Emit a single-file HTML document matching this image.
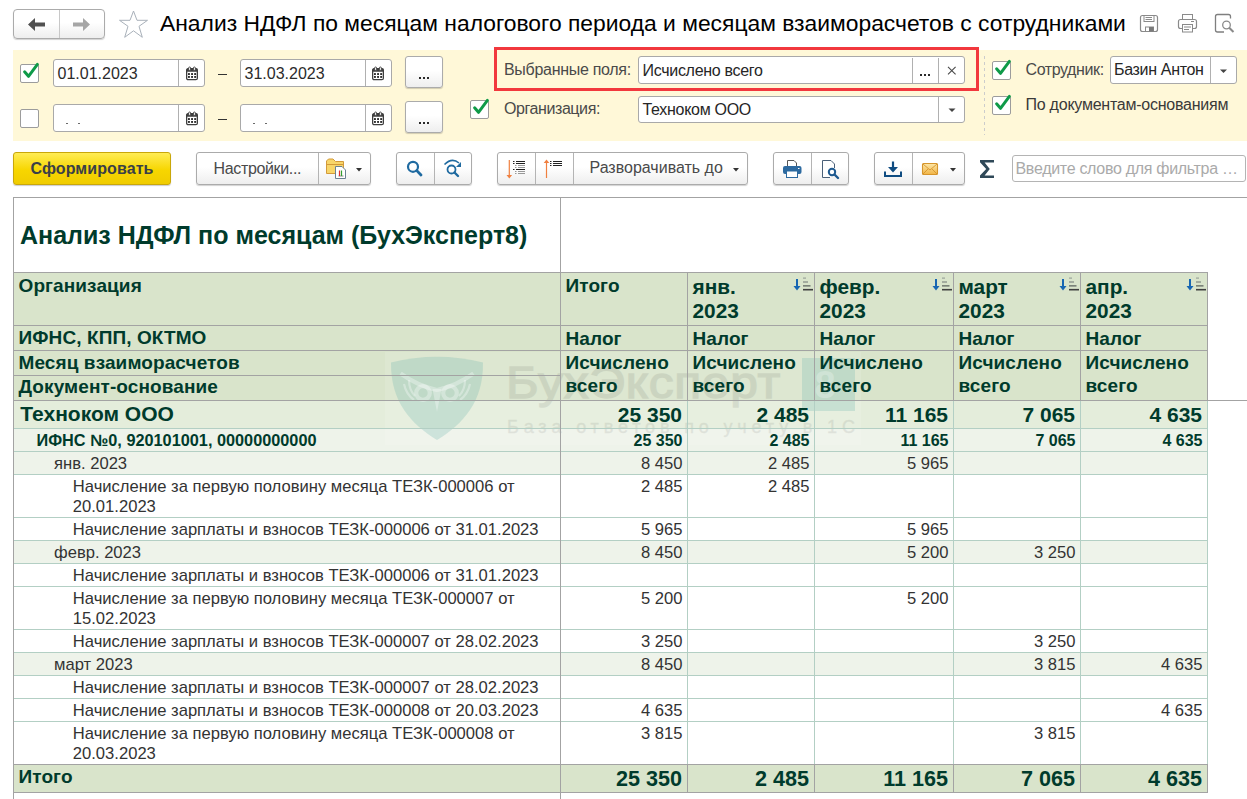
<!DOCTYPE html><html><head><meta charset="utf-8"><style>
*{margin:0;padding:0;box-sizing:border-box}
html,body{width:1247px;height:799px;overflow:hidden;background:#fff}
body{position:relative;font-family:"Liberation Sans",sans-serif}
.a{position:absolute}
.t{position:absolute;white-space:pre;z-index:3}
.btn{position:absolute;border:1px solid #ababab;border-radius:3px;background:linear-gradient(#fff 0%,#fff 45%,#eee 100%);box-shadow:0 1px 1px rgba(0,0,0,.18)}
.dv{position:absolute;width:1px;background:#b4b4b4}
.inp{position:absolute;border:1px solid #a9a9a9;border-radius:3px;background:#fff}
.cb{position:absolute;width:19px;height:19px;border:1px solid #9c9c9c;border-radius:2px;background:#fff}
svg{position:absolute;overflow:visible}
</style></head><body>
<div class="btn" style="left:13px;top:9px;width:92px;height:30px;border-radius:4px"></div>
<div class="a" style="left:59px;top:10px;width:1px;height:28px;background:#c8c8c8"></div>
<svg style="left:0;top:0" width="1" height="1"><path d="M28 24.5 L35 18 L35 22.5 L45 22.5 L45 26.5 L35 26.5 L35 31 Z" fill="#505050"/><path d="M90 24.5 L83 18 L83 22.5 L73 22.5 L73 26.5 L83 26.5 L83 31 Z" fill="#a6a6a6"/><path d="M133.5 11 L137 20.3 L147.5 20.3 L139 26.3 L142.3 37.3 L133.5 30.8 L124.7 37.3 L128 26.3 L119.5 20.3 L130 20.3 Z" fill="none" stroke="#a9b1ba" stroke-width="1"/></svg>
<div class="t" style="top:9.38px;font-size:22.85px;line-height:29px;font-weight:normal;color:#000;left:160px;">Анализ НДФЛ по месяцам налогового периода и месяцам взаиморасчетов с сотрудниками</div>
<svg style="left:0;top:0" width="1" height="1"><rect x="1140.5" y="15.5" width="17" height="16" rx="2" fill="none" stroke="#8a8a8a" stroke-width="1.2"/><rect x="1144" y="15.5" width="10" height="6" fill="none" stroke="#8a8a8a" stroke-width="1"/><line x1="1145.5" y1="17.5" x2="1152" y2="17.5" stroke="#8a8a8a"/><line x1="1145.5" y1="19.5" x2="1152" y2="19.5" stroke="#8a8a8a"/><rect x="1145.5" y="27" width="8" height="4.5" fill="#fff" stroke="#8a8a8a" stroke-width="1"/><rect x="1149" y="27" width="4.5" height="4.5" fill="#7a7a7a"/><rect x="1178.5" y="19.5" width="18" height="9" rx="2" fill="none" stroke="#8a8a8a" stroke-width="1.2"/><rect x="1182.5" y="14.5" width="10" height="5" fill="none" stroke="#8a8a8a" stroke-width="1"/><rect x="1182.5" y="24.5" width="10" height="7.5" fill="#fff" stroke="#8a8a8a" stroke-width="1"/><line x1="1184" y1="27" x2="1191" y2="27" stroke="#8a8a8a"/><line x1="1184" y1="29.5" x2="1189" y2="29.5" stroke="#8a8a8a"/><line x1="1191" y1="21.5" x2="1194" y2="21.5" stroke="#8a8a8a"/><path d="M1224 32 L1217.5 32 Q1215.5 32 1215.5 30 L1215.5 16.5 Q1215.5 14.5 1217.5 14.5 L1228.5 14.5 Q1230.5 14.5 1230.5 16.5 L1230.5 18.5" fill="none" stroke="#7f7f7f" stroke-width="1.3"/><circle cx="1226.5" cy="25" r="3.8" fill="none" stroke="#8a8a8a" stroke-width="1.3"/><line x1="1229.2" y1="27.8" x2="1233.5" y2="32" stroke="#8a8a8a" stroke-width="2"/></svg>
<div class="a" style="left:13px;top:50px;width:1234px;height:91px;background:#fff8d8"></div>
<div class="cb" style="left:20px;top:64px"></div>
<svg style="left:20px;top:64px" width="1" height="1"><path d="M4.6 7.8 L8.5 12.3 L17.4 0.4" fill="none" stroke="#0f9a48" stroke-width="3" stroke-linecap="round" stroke-linejoin="round"/></svg>
<div class="inp" style="left:53px;top:59px;width:152px;height:28px"></div>
<div class="a" style="left:178px;top:60px;width:1px;height:26px;background:#b0b0b0"></div>
<svg style="left:185.5px;top:66.5px" width="1" height="1"><rect x="0.65" y="1.65" width="10.7" height="11" rx="1.5" fill="#fff" stroke="#3e3e3e" stroke-width="1.3"/><rect x="0.5" y="1.5" width="11" height="3.3" rx="1" fill="#3e3e3e"/><rect x="2.6" y="0" width="2" height="3.4" rx="1" fill="#fff" stroke="#3e3e3e" stroke-width="0.9"/><rect x="7.4" y="0" width="2" height="3.4" rx="1" fill="#fff" stroke="#3e3e3e" stroke-width="0.9"/><rect x="2.0" y="6.1" width="1.9" height="1.9" fill="#2e2e2e"/><rect x="5.1" y="6.1" width="1.9" height="1.9" fill="#2e2e2e"/><rect x="8.2" y="6.1" width="1.9" height="1.9" fill="#2e2e2e"/><rect x="2.0" y="9.0" width="1.9" height="1.9" fill="#2e2e2e"/><rect x="5.1" y="9.0" width="1.9" height="1.9" fill="#2e2e2e"/><rect x="8.2" y="9.0" width="1.9" height="1.9" fill="#2e2e2e"/></svg>
<div class="t" style="top:64.06px;font-size:16px;line-height:20px;font-weight:normal;color:#2b2b2b;left:57.5px;">01.01.2023</div>
<div class="a" style="left:218px;top:74px;width:9px;height:1px;background:#333"></div>
<div class="inp" style="left:240px;top:59px;width:151.5px;height:28px"></div>
<div class="a" style="left:365px;top:60px;width:1px;height:26px;background:#b0b0b0"></div>
<svg style="left:372.25px;top:66.5px" width="1" height="1"><rect x="0.65" y="1.65" width="10.7" height="11" rx="1.5" fill="#fff" stroke="#3e3e3e" stroke-width="1.3"/><rect x="0.5" y="1.5" width="11" height="3.3" rx="1" fill="#3e3e3e"/><rect x="2.6" y="0" width="2" height="3.4" rx="1" fill="#fff" stroke="#3e3e3e" stroke-width="0.9"/><rect x="7.4" y="0" width="2" height="3.4" rx="1" fill="#fff" stroke="#3e3e3e" stroke-width="0.9"/><rect x="2.0" y="6.1" width="1.9" height="1.9" fill="#2e2e2e"/><rect x="5.1" y="6.1" width="1.9" height="1.9" fill="#2e2e2e"/><rect x="8.2" y="6.1" width="1.9" height="1.9" fill="#2e2e2e"/><rect x="2.0" y="9.0" width="1.9" height="1.9" fill="#2e2e2e"/><rect x="5.1" y="9.0" width="1.9" height="1.9" fill="#2e2e2e"/><rect x="8.2" y="9.0" width="1.9" height="1.9" fill="#2e2e2e"/></svg>
<div class="t" style="top:64.06px;font-size:16px;line-height:20px;font-weight:normal;color:#2b2b2b;left:244.5px;">31.03.2023</div>
<div class="btn" style="left:405px;top:56px;width:38px;height:32px"></div>
<div class="a" style="left:419px;top:76.5px;width:2px;height:2.0px;background:#2a2a2a"></div>
<div class="a" style="left:423px;top:76.5px;width:2px;height:2.0px;background:#2a2a2a"></div>
<div class="a" style="left:427px;top:76.5px;width:2px;height:2.0px;background:#2a2a2a"></div>
<div class="cb" style="left:20px;top:109px"></div>
<div class="inp" style="left:53px;top:104px;width:152px;height:28px"></div>
<div class="a" style="left:178px;top:105px;width:1px;height:26px;background:#b0b0b0"></div>
<svg style="left:185.5px;top:111.5px" width="1" height="1"><rect x="0.65" y="1.65" width="10.7" height="11" rx="1.5" fill="#fff" stroke="#3e3e3e" stroke-width="1.3"/><rect x="0.5" y="1.5" width="11" height="3.3" rx="1" fill="#3e3e3e"/><rect x="2.6" y="0" width="2" height="3.4" rx="1" fill="#fff" stroke="#3e3e3e" stroke-width="0.9"/><rect x="7.4" y="0" width="2" height="3.4" rx="1" fill="#fff" stroke="#3e3e3e" stroke-width="0.9"/><rect x="2.0" y="6.1" width="1.9" height="1.9" fill="#2e2e2e"/><rect x="5.1" y="6.1" width="1.9" height="1.9" fill="#2e2e2e"/><rect x="8.2" y="6.1" width="1.9" height="1.9" fill="#2e2e2e"/><rect x="2.0" y="9.0" width="1.9" height="1.9" fill="#2e2e2e"/><rect x="5.1" y="9.0" width="1.9" height="1.9" fill="#2e2e2e"/><rect x="8.2" y="9.0" width="1.9" height="1.9" fill="#2e2e2e"/></svg>
<div class="a" style="left:66px;top:122.8px;width:2.2px;height:1.5px;background:#6a6a6a"></div>
<div class="a" style="left:78px;top:122.8px;width:2.2px;height:1.5px;background:#6a6a6a"></div>
<div class="a" style="left:218px;top:118.5px;width:9px;height:1.0px;background:#333"></div>
<div class="inp" style="left:240px;top:104px;width:151.5px;height:28px"></div>
<div class="a" style="left:365px;top:105px;width:1px;height:26px;background:#b0b0b0"></div>
<svg style="left:372.25px;top:111.5px" width="1" height="1"><rect x="0.65" y="1.65" width="10.7" height="11" rx="1.5" fill="#fff" stroke="#3e3e3e" stroke-width="1.3"/><rect x="0.5" y="1.5" width="11" height="3.3" rx="1" fill="#3e3e3e"/><rect x="2.6" y="0" width="2" height="3.4" rx="1" fill="#fff" stroke="#3e3e3e" stroke-width="0.9"/><rect x="7.4" y="0" width="2" height="3.4" rx="1" fill="#fff" stroke="#3e3e3e" stroke-width="0.9"/><rect x="2.0" y="6.1" width="1.9" height="1.9" fill="#2e2e2e"/><rect x="5.1" y="6.1" width="1.9" height="1.9" fill="#2e2e2e"/><rect x="8.2" y="6.1" width="1.9" height="1.9" fill="#2e2e2e"/><rect x="2.0" y="9.0" width="1.9" height="1.9" fill="#2e2e2e"/><rect x="5.1" y="9.0" width="1.9" height="1.9" fill="#2e2e2e"/><rect x="8.2" y="9.0" width="1.9" height="1.9" fill="#2e2e2e"/></svg>
<div class="a" style="left:253px;top:122.8px;width:2.2px;height:1.5px;background:#6a6a6a"></div>
<div class="a" style="left:265px;top:122.8px;width:2.2px;height:1.5px;background:#6a6a6a"></div>
<div class="btn" style="left:405px;top:101px;width:38px;height:32px"></div>
<div class="a" style="left:419px;top:121.5px;width:2px;height:2.0px;background:#2a2a2a"></div>
<div class="a" style="left:423px;top:121.5px;width:2px;height:2.0px;background:#2a2a2a"></div>
<div class="a" style="left:427px;top:121.5px;width:2px;height:2.0px;background:#2a2a2a"></div>
<div class="a" style="left:494px;top:47px;width:485px;height:44px;border:3px solid #f2383d"></div>
<div class="t" style="top:60.36px;font-size:16px;line-height:20px;font-weight:normal;color:#4a4a4a;letter-spacing:-0.3px;left:504px;">Выбранные поля:</div>
<div class="inp" style="left:638px;top:56px;width:327px;height:28px"></div>
<div class="a" style="left:912px;top:57.5px;width:1px;height:25.5px;background:#b0b0b0"></div>
<div class="a" style="left:938px;top:57.5px;width:1px;height:25.5px;background:#b0b0b0"></div>
<div class="t" style="top:60.66px;font-size:16px;line-height:20px;font-weight:normal;color:#262626;letter-spacing:-0.3px;left:642.5px;">Исчислено всего</div>
<div class="a" style="left:920px;top:74px;width:2px;height:2px;background:#2a2a2a"></div>
<div class="a" style="left:924px;top:74px;width:2px;height:2px;background:#2a2a2a"></div>
<div class="a" style="left:928px;top:74px;width:2px;height:2px;background:#2a2a2a"></div>
<svg style="left:0;top:0" width="1" height="1"><path d="M948 66.8 L955.6 74.4 M955.6 66.8 L948 74.4" stroke="#4a4a4a" stroke-width="1.1"/></svg>
<div class="cb" style="left:470px;top:99.5px"></div>
<svg style="left:470px;top:99.5px" width="1" height="1"><path d="M4.6 7.8 L8.5 12.3 L17.4 0.4" fill="none" stroke="#0f9a48" stroke-width="3" stroke-linecap="round" stroke-linejoin="round"/></svg>
<div class="t" style="top:99.46px;font-size:16px;line-height:20px;font-weight:normal;color:#4a4a4a;letter-spacing:-0.42px;left:504px;">Организация:</div>
<div class="inp" style="left:638px;top:96px;width:327px;height:27px"></div>
<div class="a" style="left:938px;top:97px;width:1px;height:25px;background:#b0b0b0"></div>
<div class="t" style="top:99.66px;font-size:16px;line-height:20px;font-weight:normal;color:#262626;letter-spacing:-0.3px;left:642.5px;">Техноком ООО</div>
<svg style="left:0;top:0" width="1" height="1"><path d="M948.5 108.5 L955.5 108.5 L952 112 Z" fill="#444"/></svg>
<div class="a" style="left:984px;top:56px;width:1px;height:79px;background:repeating-linear-gradient(#cccccc 0 3.5px,transparent 3.5px 6px)"></div>
<div class="cb" style="left:992px;top:61px"></div>
<svg style="left:992px;top:61px" width="1" height="1"><path d="M4.6 7.8 L8.5 12.3 L17.4 0.4" fill="none" stroke="#0f9a48" stroke-width="3" stroke-linecap="round" stroke-linejoin="round"/></svg>
<div class="t" style="top:60.36px;font-size:16px;line-height:20px;font-weight:normal;color:#4a4a4a;letter-spacing:-0.4px;left:1025.5px;">Сотрудник:</div>
<div class="inp" style="left:1110px;top:56px;width:127px;height:28px"></div>
<div class="a" style="left:1210px;top:57px;width:1px;height:26px;background:#b0b0b0"></div>
<div class="t" style="top:60.36px;font-size:16px;line-height:20px;font-weight:normal;color:#262626;letter-spacing:-0.33px;left:1114px;">Базин Антон</div>
<svg style="left:0;top:0" width="1" height="1"><path d="M1220 69.5 L1227 69.5 L1223.5 73 Z" fill="#444"/></svg>
<div class="cb" style="left:992px;top:96px"></div>
<svg style="left:992px;top:96px" width="1" height="1"><path d="M4.6 7.8 L8.5 12.3 L17.4 0.4" fill="none" stroke="#0f9a48" stroke-width="3" stroke-linecap="round" stroke-linejoin="round"/></svg>
<div class="t" style="top:95.26px;font-size:16px;line-height:20px;font-weight:normal;color:#3a3a3a;letter-spacing:-0.24px;left:1025.5px;">По документам-основаниям</div>
<div class="a" style="left:13px;top:152px;width:158px;height:33px;border:1px solid #c9a70a;border-radius:3px;background:linear-gradient(#ffec55,#f7d600 55%,#f0cc00);box-shadow:0 1px 1px rgba(0,0,0,.2)"></div>
<div class="t" style="top:158.76px;font-size:16px;line-height:20px;font-weight:bold;color:#3a3f48;letter-spacing:0.1px;left:-208px;width:600px;text-align:center;">Сформировать</div>
<div class="btn" style="left:196px;top:152px;width:175px;height:32.5px"></div>
<div class="dv" style="left:318px;top:153px;height:31px"></div>
<div class="t" style="top:158.66px;font-size:16px;line-height:20px;font-weight:normal;color:#4a4a4a;letter-spacing:-0.35px;left:213.5px;">Настройки...</div>
<svg style="left:0;top:0" width="1" height="1"><path d="M356 168 L362 168 L359 171.5 Z" fill="#333"/></svg>
<svg style="left:0;top:0" width="1" height="1"><path d="M326.5 173.5 L326.5 161 L328.5 159 L333 159 L335.5 161.5 L343.5 161.5 L343.5 173.5 Z" fill="#f8d66a" stroke="#d39a3a" stroke-width="1"/><path d="M327 164.5 L343 164.5" stroke="#d39a3a" stroke-width="1"/><path d="M335.5 166.5 L342 166.5 L345.5 170 L345.5 178.5 L335.5 178.5 Z" fill="#fff" stroke="#6b8192" stroke-width="1"/><line x1="338.5" y1="176" x2="343.5" y2="176" stroke="#888"/><line x1="339.5" y1="170.5" x2="339.5" y2="176" stroke="#e03030" stroke-width="1.2"/><line x1="341.5" y1="170.5" x2="341.5" y2="176" stroke="#30a030" stroke-width="1.2"/></svg>
<div class="btn" style="left:396px;top:152px;width:76px;height:32.5px"></div>
<div class="dv" style="left:434px;top:153px;height:31px"></div>
<svg style="left:0;top:0" width="1" height="1"><circle cx="413" cy="166.8" r="5" fill="none" stroke="#1f6aa0" stroke-width="2.2"/><line x1="416.8" y1="170.6" x2="421" y2="175" stroke="#1f6aa0" stroke-width="2.8" stroke-linecap="round"/><circle cx="451.5" cy="169.5" r="4" fill="none" stroke="#1f6aa0" stroke-width="1.8"/><line x1="454.5" y1="172.5" x2="458" y2="176" stroke="#1f6aa0" stroke-width="2.4" stroke-linecap="round"/><path d="M444.5 164.5 Q452 157 459 163" fill="none" stroke="#1f6aa0" stroke-width="1.6"/><path d="M461 162 L461 167 L456 167 Z" fill="#1f6aa0"/></svg>
<div class="btn" style="left:497px;top:152px;width:251px;height:32.5px"></div>
<div class="dv" style="left:535px;top:153px;height:31px"></div>
<div class="dv" style="left:573px;top:153px;height:31px"></div>
<div class="t" style="top:158.46px;font-size:16px;line-height:20px;font-weight:normal;color:#4a4a4a;left:589.5px;">Разворачивать до</div>
<svg style="left:0;top:0" width="1" height="1"><path d="M733 168 L739 168 L736 171.5 Z" fill="#333"/><line x1="509.3" y1="160" x2="509.3" y2="176" stroke="#f08040" stroke-width="1.2"/><path d="M506.5 175 L512.1 175 L509.3 178.5 Z" fill="#f08040"/><line x1="546.5" y1="162" x2="546.5" y2="178" stroke="#f08040" stroke-width="1.2"/><path d="M543.7 163 L549.3 163 L546.5 159.5 Z" fill="#f08040"/>
<rect x="513" y="161.0" width="1.5" height="1" fill="#222"/><rect x="516" y="161.0" width="9" height="1" fill="#222"/>
<rect x="513" y="163.0" width="1.5" height="1" fill="#222"/><rect x="516" y="163.0" width="9" height="1" fill="#222"/>
<rect x="515" y="165.0" width="1.5" height="1" fill="#999"/><rect x="518" y="165.0" width="7" height="1" fill="#999"/>
<rect x="515" y="167.0" width="1.5" height="1" fill="#999"/><rect x="518" y="167.0" width="7" height="1" fill="#999"/>
<rect x="513" y="169.0" width="1.5" height="1" fill="#222"/><rect x="516" y="169.0" width="9" height="1" fill="#222"/>
<rect x="515" y="171.0" width="1.5" height="1" fill="#999"/><rect x="518" y="171.0" width="7" height="1" fill="#999"/>
<rect x="515" y="173.0" width="1.5" height="1" fill="#999"/><rect x="518" y="173.0" width="7" height="1" fill="#999"/>
<rect x="550" y="161.0" width="1.5" height="1" fill="#222"/><rect x="553" y="161.0" width="9" height="1" fill="#222"/>
<rect x="550" y="163.0" width="1.5" height="1" fill="#222"/><rect x="553" y="163.0" width="9" height="1" fill="#222"/>
<rect x="550" y="165.0" width="1.5" height="1" fill="#222"/><rect x="553" y="165.0" width="9" height="1" fill="#222"/>
</svg>
<div class="btn" style="left:773px;top:152px;width:76px;height:32.5px"></div>
<div class="dv" style="left:811px;top:153px;height:31px"></div>
<svg style="left:0;top:0" width="1" height="1"><path d="M787.5 167 L787.5 160.5 L794 160.5 L796.5 163 L796.5 167" fill="#fff" stroke="#555" stroke-width="1"/><rect x="783" y="166" width="18.5" height="8" rx="2" fill="#2d6aa0"/><rect x="786.5" y="171" width="11" height="6.5" fill="#fff" stroke="#2d6aa0" stroke-width="1"/><rect x="798" y="168" width="1.5" height="1" fill="#fff"/><path d="M830 177.5 L822.5 177.5 L822.5 160.5 L831 160.5 L834.5 164 L834.5 168" fill="#fff" stroke="#4a6078" stroke-width="1"/><circle cx="832" cy="172" r="3.2" fill="#fff" stroke="#1f5a90" stroke-width="2"/><line x1="834.5" y1="174.5" x2="838" y2="178" stroke="#1f5a90" stroke-width="2.4" stroke-linecap="round"/></svg>
<div class="btn" style="left:874px;top:152px;width:91px;height:32.5px"></div>
<div class="dv" style="left:912px;top:153px;height:31px"></div>
<svg style="left:0;top:0" width="1" height="1"><line x1="893" y1="161.5" x2="893" y2="171" stroke="#0f4c81" stroke-width="2.2"/><path d="M888 167 L898 167 L893 172.5 Z" fill="#0f4c81"/><path d="M885 172.3 L885 176 L901 176 L901 172.3" fill="none" stroke="#0f4c81" stroke-width="2" stroke-linecap="round"/><defs><linearGradient id="env" x1="0" y1="0" x2="0" y2="1"><stop offset="0" stop-color="#fde7a8"/><stop offset="1" stop-color="#f1b445"/></linearGradient></defs><rect x="922.5" y="163.5" width="15" height="11" rx="1" fill="url(#env)" stroke="#d6952c" stroke-width="1.1"/><path d="M923 164 L930 170 L937 164 M923 174 L928 169 M937 174 L932 169" fill="none" stroke="#d6952c" stroke-width="0.9"/><path d="M950 168 L956 168 L953 171.5 Z" fill="#333"/></svg>
<svg style="left:0;top:0" width="1" height="1"><path d="M980 160 L994 160 L994 162.6 L984.6 162.6 L989.8 169 L984.6 175.4 L994 175.4 L994 178 L980 178 L980 175.6 L986.2 169 L980 162.2 Z" fill="#2f4858"/></svg>
<div class="inp" style="left:1011.5px;top:155px;width:234px;height:27px;border-color:#b4b4b4"></div>
<div class="t" style="top:159.06px;font-size:16px;line-height:20px;font-weight:normal;color:#aaaaaa;letter-spacing:-0.3px;left:1015.5px;">Введите слово для фильтра …</div>
<div class="a" style="left:13px;top:197px;width:1234px;height:1px;background:#a3a3a3;z-index:2"></div>
<div class="a" style="left:13px;top:197px;width:1px;height:602px;background:#a3a3a3;z-index:2"></div>
<div class="t" style="top:219.74px;font-size:25px;line-height:31px;font-weight:bold;color:#003b2c;left:20px;">Анализ НДФЛ по месяцам (БухЭксперт8)</div>
<div class="a" style="left:560px;top:198px;width:1px;height:74px;background:#a3a3a3;z-index:2"></div>
<div class="a" style="left:14px;top:272px;width:1193px;height:128px;background:#d9e4cb"></div>
<div class="a" style="left:13px;top:272px;width:1195px;height:1px;background:#a3a3a3;z-index:2"></div>
<div class="a" style="left:13px;top:325px;width:1195px;height:1px;background:#a3a3a3;z-index:2"></div>
<div class="a" style="left:13px;top:350px;width:1195px;height:1px;background:#a3a3a3;z-index:2"></div>
<div class="a" style="left:13px;top:375px;width:548px;height:1px;background:#a3a3a3;z-index:2"></div>
<div class="a" style="left:13px;top:400px;width:1234px;height:1px;background:#a3a3a3;z-index:2"></div>
<div class="a" style="left:560px;top:272px;width:1px;height:128px;background:#a3a3a3;z-index:2"></div>
<div class="a" style="left:687px;top:272px;width:1px;height:128px;background:#a3a3a3;z-index:2"></div>
<div class="a" style="left:814px;top:272px;width:1px;height:128px;background:#a3a3a3;z-index:2"></div>
<div class="a" style="left:953px;top:272px;width:1px;height:128px;background:#a3a3a3;z-index:2"></div>
<div class="a" style="left:1080px;top:272px;width:1px;height:128px;background:#a3a3a3;z-index:2"></div>
<div class="a" style="left:1207px;top:272px;width:1px;height:128px;background:#a3a3a3;z-index:2"></div>
<div class="t" style="top:273.92px;font-size:19px;line-height:24px;font-weight:bold;color:#003b2c;letter-spacing:0.1px;left:18.5px;">Организация</div>
<div class="t" style="top:325.92px;font-size:19px;line-height:24px;font-weight:bold;color:#003b2c;letter-spacing:0.1px;left:18.5px;">ИФНС, КПП, ОКТМО</div>
<div class="t" style="top:350.92px;font-size:19px;line-height:24px;font-weight:bold;color:#003b2c;letter-spacing:0.1px;left:18.5px;">Месяц взаиморасчетов</div>
<div class="t" style="top:375.12px;font-size:19px;line-height:24px;font-weight:bold;color:#003b2c;letter-spacing:0.1px;left:18.5px;">Документ-основание</div>
<div class="t" style="top:273.82px;font-size:19px;line-height:24px;font-weight:bold;color:#003b2c;letter-spacing:0.1px;left:565.5px;">Итого</div>
<div class="t" style="top:273.59px;font-size:20.8px;line-height:26px;font-weight:bold;color:#003b2c;left:692.5px;">янв.</div>
<div class="t" style="top:298.19px;font-size:20.8px;line-height:26px;font-weight:bold;color:#003b2c;left:692.5px;">2023</div>
<div class="t" style="top:273.59px;font-size:20.8px;line-height:26px;font-weight:bold;color:#003b2c;left:819.5px;">февр.</div>
<div class="t" style="top:298.19px;font-size:20.8px;line-height:26px;font-weight:bold;color:#003b2c;left:819.5px;">2023</div>
<div class="t" style="top:273.59px;font-size:20.8px;line-height:26px;font-weight:bold;color:#003b2c;left:958.5px;">март</div>
<div class="t" style="top:298.19px;font-size:20.8px;line-height:26px;font-weight:bold;color:#003b2c;left:958.5px;">2023</div>
<div class="t" style="top:273.59px;font-size:20.8px;line-height:26px;font-weight:bold;color:#003b2c;left:1085.5px;">апр.</div>
<div class="t" style="top:298.19px;font-size:20.8px;line-height:26px;font-weight:bold;color:#003b2c;left:1085.5px;">2023</div>
<div class="t" style="top:326.62px;font-size:19px;line-height:24px;font-weight:bold;color:#003b2c;letter-spacing:0.1px;left:565.5px;">Налог</div>
<div class="t" style="top:351.32px;font-size:19px;line-height:24px;font-weight:bold;color:#003b2c;letter-spacing:0.1px;left:565.5px;">Исчислено</div>
<div class="t" style="top:374.22px;font-size:19px;line-height:24px;font-weight:bold;color:#003b2c;letter-spacing:0.1px;left:565.5px;">всего</div>
<div class="t" style="top:326.62px;font-size:19px;line-height:24px;font-weight:bold;color:#003b2c;letter-spacing:0.1px;left:692.5px;">Налог</div>
<div class="t" style="top:351.32px;font-size:19px;line-height:24px;font-weight:bold;color:#003b2c;letter-spacing:0.1px;left:692.5px;">Исчислено</div>
<div class="t" style="top:374.22px;font-size:19px;line-height:24px;font-weight:bold;color:#003b2c;letter-spacing:0.1px;left:692.5px;">всего</div>
<div class="t" style="top:326.62px;font-size:19px;line-height:24px;font-weight:bold;color:#003b2c;letter-spacing:0.1px;left:819.5px;">Налог</div>
<div class="t" style="top:351.32px;font-size:19px;line-height:24px;font-weight:bold;color:#003b2c;letter-spacing:0.1px;left:819.5px;">Исчислено</div>
<div class="t" style="top:374.22px;font-size:19px;line-height:24px;font-weight:bold;color:#003b2c;letter-spacing:0.1px;left:819.5px;">всего</div>
<div class="t" style="top:326.62px;font-size:19px;line-height:24px;font-weight:bold;color:#003b2c;letter-spacing:0.1px;left:958.5px;">Налог</div>
<div class="t" style="top:351.32px;font-size:19px;line-height:24px;font-weight:bold;color:#003b2c;letter-spacing:0.1px;left:958.5px;">Исчислено</div>
<div class="t" style="top:374.22px;font-size:19px;line-height:24px;font-weight:bold;color:#003b2c;letter-spacing:0.1px;left:958.5px;">всего</div>
<div class="t" style="top:326.62px;font-size:19px;line-height:24px;font-weight:bold;color:#003b2c;letter-spacing:0.1px;left:1085.5px;">Налог</div>
<div class="t" style="top:351.32px;font-size:19px;line-height:24px;font-weight:bold;color:#003b2c;letter-spacing:0.1px;left:1085.5px;">Исчислено</div>
<div class="t" style="top:374.22px;font-size:19px;line-height:24px;font-weight:bold;color:#003b2c;letter-spacing:0.1px;left:1085.5px;">всего</div>
<svg style="left:-393px;top:0" width="1" height="1"><rect x="1189" y="279" width="2" height="8" fill="#1766b2"/><path d="M1186.5 286 L1193.5 286 L1190 290.5 Z" fill="#1766b2"/><rect x="1196" y="277.5" width="3" height="1.2" fill="#9aa39a"/><rect x="1196" y="281.3" width="5" height="1.4" fill="#8c948c"/><rect x="1196" y="285.1" width="7.5" height="1.5" fill="#707870"/><rect x="1196" y="288.9" width="10" height="1.6" fill="#404040"/></svg>
<svg style="left:-254px;top:0" width="1" height="1"><rect x="1189" y="279" width="2" height="8" fill="#1766b2"/><path d="M1186.5 286 L1193.5 286 L1190 290.5 Z" fill="#1766b2"/><rect x="1196" y="277.5" width="3" height="1.2" fill="#9aa39a"/><rect x="1196" y="281.3" width="5" height="1.4" fill="#8c948c"/><rect x="1196" y="285.1" width="7.5" height="1.5" fill="#707870"/><rect x="1196" y="288.9" width="10" height="1.6" fill="#404040"/></svg>
<svg style="left:-127px;top:0" width="1" height="1"><rect x="1189" y="279" width="2" height="8" fill="#1766b2"/><path d="M1186.5 286 L1193.5 286 L1190 290.5 Z" fill="#1766b2"/><rect x="1196" y="277.5" width="3" height="1.2" fill="#9aa39a"/><rect x="1196" y="281.3" width="5" height="1.4" fill="#8c948c"/><rect x="1196" y="285.1" width="7.5" height="1.5" fill="#707870"/><rect x="1196" y="288.9" width="10" height="1.6" fill="#404040"/></svg>
<svg style="left:0px;top:0" width="1" height="1"><rect x="1189" y="279" width="2" height="8" fill="#1766b2"/><path d="M1186.5 286 L1193.5 286 L1190 290.5 Z" fill="#1766b2"/><rect x="1196" y="277.5" width="3" height="1.2" fill="#9aa39a"/><rect x="1196" y="281.3" width="5" height="1.4" fill="#8c948c"/><rect x="1196" y="285.1" width="7.5" height="1.5" fill="#707870"/><rect x="1196" y="288.9" width="10" height="1.6" fill="#404040"/></svg>
<div class="a" style="left:14px;top:401px;width:1193px;height:27px;background:#e4eddb"></div>
<div class="a" style="left:14px;top:429px;width:1193px;height:22px;background:#eef3ea"></div>
<div class="a" style="left:14px;top:452px;width:1193px;height:22px;background:#eef3ea"></div>
<div class="a" style="left:14px;top:475px;width:1193px;height:42px;background:#ffffff"></div>
<div class="a" style="left:14px;top:518px;width:1193px;height:22px;background:#ffffff"></div>
<div class="a" style="left:14px;top:541px;width:1193px;height:22px;background:#eef3ea"></div>
<div class="a" style="left:14px;top:564px;width:1193px;height:22px;background:#ffffff"></div>
<div class="a" style="left:14px;top:587px;width:1193px;height:42px;background:#ffffff"></div>
<div class="a" style="left:14px;top:630px;width:1193px;height:22px;background:#ffffff"></div>
<div class="a" style="left:14px;top:653px;width:1193px;height:22px;background:#eef3ea"></div>
<div class="a" style="left:14px;top:676px;width:1193px;height:22px;background:#ffffff"></div>
<div class="a" style="left:14px;top:699px;width:1193px;height:22px;background:#ffffff"></div>
<div class="a" style="left:14px;top:722px;width:1193px;height:42px;background:#ffffff"></div>
<div class="a" style="left:14px;top:765px;width:1193px;height:27px;background:#d9e4cb"></div>
<div class="a" style="left:14px;top:428px;width:1194px;height:1px;background:#b3cfc4;z-index:2"></div>
<div class="a" style="left:14px;top:451px;width:1194px;height:1px;background:#b3cfc4;z-index:2"></div>
<div class="a" style="left:14px;top:474px;width:1194px;height:1px;background:#b3cfc4;z-index:2"></div>
<div class="a" style="left:14px;top:517px;width:1194px;height:1px;background:#b3cfc4;z-index:2"></div>
<div class="a" style="left:14px;top:540px;width:1194px;height:1px;background:#b3cfc4;z-index:2"></div>
<div class="a" style="left:14px;top:563px;width:1194px;height:1px;background:#b3cfc4;z-index:2"></div>
<div class="a" style="left:14px;top:586px;width:1194px;height:1px;background:#b3cfc4;z-index:2"></div>
<div class="a" style="left:14px;top:629px;width:1194px;height:1px;background:#b3cfc4;z-index:2"></div>
<div class="a" style="left:14px;top:652px;width:1194px;height:1px;background:#b3cfc4;z-index:2"></div>
<div class="a" style="left:14px;top:675px;width:1194px;height:1px;background:#b3cfc4;z-index:2"></div>
<div class="a" style="left:14px;top:698px;width:1194px;height:1px;background:#b3cfc4;z-index:2"></div>
<div class="a" style="left:14px;top:721px;width:1194px;height:1px;background:#b3cfc4;z-index:2"></div>
<div class="a" style="left:13px;top:764px;width:1195px;height:1px;background:#a3a3a3;z-index:2"></div>
<div class="a" style="left:13px;top:792px;width:1195px;height:1px;background:#a3a3a3;z-index:2"></div>
<div class="a" style="left:560px;top:401px;width:1px;height:391px;background:#a3a3a3;z-index:2"></div>
<div class="a" style="left:687px;top:401px;width:1px;height:391px;background:#b3cfc4;z-index:2"></div>
<div class="a" style="left:814px;top:401px;width:1px;height:391px;background:#b3cfc4;z-index:2"></div>
<div class="a" style="left:953px;top:401px;width:1px;height:391px;background:#b3cfc4;z-index:2"></div>
<div class="a" style="left:1080px;top:401px;width:1px;height:391px;background:#b3cfc4;z-index:2"></div>
<div class="a" style="left:1207px;top:401px;width:1px;height:391px;background:#b3cfc4;z-index:2"></div>
<div class="a" style="left:560px;top:764px;width:1px;height:28px;background:#a3a3a3;z-index:2"></div>
<div class="a" style="left:687px;top:764px;width:1px;height:28px;background:#a3a3a3;z-index:2"></div>
<div class="a" style="left:814px;top:764px;width:1px;height:28px;background:#a3a3a3;z-index:2"></div>
<div class="a" style="left:953px;top:764px;width:1px;height:28px;background:#a3a3a3;z-index:2"></div>
<div class="a" style="left:1080px;top:764px;width:1px;height:28px;background:#a3a3a3;z-index:2"></div>
<div class="a" style="left:1207px;top:764px;width:1px;height:28px;background:#a3a3a3;z-index:2"></div>
<div class="a" style="left:560px;top:792px;width:1px;height:7px;background:#a3a3a3;z-index:2"></div>
<div class="t" style="top:401.12px;font-size:21px;line-height:26px;font-weight:bold;color:#003b2c;left:20.3px;">Техноком ООО</div>
<div class="t" style="top:401.52px;font-size:21px;line-height:26px;font-weight:bold;color:#003b2c;right:565px;text-align:right;">25 350</div>
<div class="t" style="top:401.52px;font-size:21px;line-height:26px;font-weight:bold;color:#003b2c;right:438px;text-align:right;">2 485</div>
<div class="t" style="top:401.52px;font-size:21px;line-height:26px;font-weight:bold;color:#003b2c;right:299px;text-align:right;">11 165</div>
<div class="t" style="top:401.52px;font-size:21px;line-height:26px;font-weight:bold;color:#003b2c;right:172px;text-align:right;">7 065</div>
<div class="t" style="top:401.52px;font-size:21px;line-height:26px;font-weight:bold;color:#003b2c;right:45px;text-align:right;">4 635</div>
<div class="t" style="top:429.95px;font-size:16.3px;line-height:20px;font-weight:bold;color:#003b2c;left:36.5px;">ИФНС №0, 920101001, 00000000000</div>
<div class="t" style="top:430.86px;font-size:16px;line-height:20px;font-weight:bold;color:#003b2c;right:564.5px;text-align:right;">25 350</div>
<div class="t" style="top:430.86px;font-size:16px;line-height:20px;font-weight:bold;color:#003b2c;right:437.5px;text-align:right;">2 485</div>
<div class="t" style="top:430.86px;font-size:16px;line-height:20px;font-weight:bold;color:#003b2c;right:298.5px;text-align:right;">11 165</div>
<div class="t" style="top:430.86px;font-size:16px;line-height:20px;font-weight:bold;color:#003b2c;right:171.5px;text-align:right;">7 065</div>
<div class="t" style="top:430.86px;font-size:16px;line-height:20px;font-weight:bold;color:#003b2c;right:44.5px;text-align:right;">4 635</div>
<div class="t" style="top:452.85px;font-size:16.6px;line-height:21px;font-weight:normal;color:#333;left:54px;">янв. 2023</div>
<div class="t" style="top:452.85px;font-size:16.6px;line-height:21px;font-weight:normal;color:#333;right:564.5px;text-align:right;">8 450</div>
<div class="t" style="top:452.85px;font-size:16.6px;line-height:21px;font-weight:normal;color:#333;right:437.5px;text-align:right;">2 485</div>
<div class="t" style="top:452.85px;font-size:16.6px;line-height:21px;font-weight:normal;color:#333;right:298.5px;text-align:right;">5 965</div>
<div class="t" style="top:475.85px;font-size:16.6px;line-height:21px;font-weight:normal;color:#333;left:72.8px;">Начисление за первую половину месяца ТЕЗК-000006 от</div>
<div class="t" style="top:495.85px;font-size:16.6px;line-height:21px;font-weight:normal;color:#333;left:72.8px;">20.01.2023</div>
<div class="t" style="top:475.85px;font-size:16.6px;line-height:21px;font-weight:normal;color:#333;right:564.5px;text-align:right;">2 485</div>
<div class="t" style="top:475.85px;font-size:16.6px;line-height:21px;font-weight:normal;color:#333;right:437.5px;text-align:right;">2 485</div>
<div class="t" style="top:518.85px;font-size:16.6px;line-height:21px;font-weight:normal;color:#333;left:72.8px;">Начисление зарплаты и взносов ТЕЗК-000006 от 31.01.2023</div>
<div class="t" style="top:518.85px;font-size:16.6px;line-height:21px;font-weight:normal;color:#333;right:564.5px;text-align:right;">5 965</div>
<div class="t" style="top:518.85px;font-size:16.6px;line-height:21px;font-weight:normal;color:#333;right:298.5px;text-align:right;">5 965</div>
<div class="t" style="top:541.85px;font-size:16.6px;line-height:21px;font-weight:normal;color:#333;left:54px;">февр. 2023</div>
<div class="t" style="top:541.85px;font-size:16.6px;line-height:21px;font-weight:normal;color:#333;right:564.5px;text-align:right;">8 450</div>
<div class="t" style="top:541.85px;font-size:16.6px;line-height:21px;font-weight:normal;color:#333;right:298.5px;text-align:right;">5 200</div>
<div class="t" style="top:541.85px;font-size:16.6px;line-height:21px;font-weight:normal;color:#333;right:171.5px;text-align:right;">3 250</div>
<div class="t" style="top:564.85px;font-size:16.6px;line-height:21px;font-weight:normal;color:#333;left:72.8px;">Начисление зарплаты и взносов ТЕЗК-000006 от 31.01.2023</div>
<div class="t" style="top:587.85px;font-size:16.6px;line-height:21px;font-weight:normal;color:#333;left:72.8px;">Начисление за первую половину месяца ТЕЗК-000007 от</div>
<div class="t" style="top:607.85px;font-size:16.6px;line-height:21px;font-weight:normal;color:#333;left:72.8px;">15.02.2023</div>
<div class="t" style="top:587.85px;font-size:16.6px;line-height:21px;font-weight:normal;color:#333;right:564.5px;text-align:right;">5 200</div>
<div class="t" style="top:587.85px;font-size:16.6px;line-height:21px;font-weight:normal;color:#333;right:298.5px;text-align:right;">5 200</div>
<div class="t" style="top:630.85px;font-size:16.6px;line-height:21px;font-weight:normal;color:#333;left:72.8px;">Начисление зарплаты и взносов ТЕЗК-000007 от 28.02.2023</div>
<div class="t" style="top:630.85px;font-size:16.6px;line-height:21px;font-weight:normal;color:#333;right:564.5px;text-align:right;">3 250</div>
<div class="t" style="top:630.85px;font-size:16.6px;line-height:21px;font-weight:normal;color:#333;right:171.5px;text-align:right;">3 250</div>
<div class="t" style="top:653.85px;font-size:16.6px;line-height:21px;font-weight:normal;color:#333;left:54px;">март 2023</div>
<div class="t" style="top:653.85px;font-size:16.6px;line-height:21px;font-weight:normal;color:#333;right:564.5px;text-align:right;">8 450</div>
<div class="t" style="top:653.85px;font-size:16.6px;line-height:21px;font-weight:normal;color:#333;right:171.5px;text-align:right;">3 815</div>
<div class="t" style="top:653.85px;font-size:16.6px;line-height:21px;font-weight:normal;color:#333;right:44.5px;text-align:right;">4 635</div>
<div class="t" style="top:676.85px;font-size:16.6px;line-height:21px;font-weight:normal;color:#333;left:72.8px;">Начисление зарплаты и взносов ТЕЗК-000007 от 28.02.2023</div>
<div class="t" style="top:699.85px;font-size:16.6px;line-height:21px;font-weight:normal;color:#333;left:72.8px;">Начисление зарплаты и взносов ТЕЗК-000008 от 20.03.2023</div>
<div class="t" style="top:699.85px;font-size:16.6px;line-height:21px;font-weight:normal;color:#333;right:564.5px;text-align:right;">4 635</div>
<div class="t" style="top:699.85px;font-size:16.6px;line-height:21px;font-weight:normal;color:#333;right:44.5px;text-align:right;">4 635</div>
<div class="t" style="top:722.85px;font-size:16.6px;line-height:21px;font-weight:normal;color:#333;left:72.8px;">Начисление за первую половину месяца ТЕЗК-000008 от</div>
<div class="t" style="top:742.85px;font-size:16.6px;line-height:21px;font-weight:normal;color:#333;left:72.8px;">20.03.2023</div>
<div class="t" style="top:722.85px;font-size:16.6px;line-height:21px;font-weight:normal;color:#333;right:564.5px;text-align:right;">3 815</div>
<div class="t" style="top:722.85px;font-size:16.6px;line-height:21px;font-weight:normal;color:#333;right:171.5px;text-align:right;">3 815</div>
<div class="t" style="top:764.82px;font-size:19px;line-height:24px;font-weight:bold;color:#003b2c;letter-spacing:0.1px;left:18.5px;">Итого</div>
<div class="t" style="top:765.02px;font-size:21.6px;line-height:27px;font-weight:bold;color:#003b2c;right:565px;text-align:right;">25 350</div>
<div class="t" style="top:765.02px;font-size:21.6px;line-height:27px;font-weight:bold;color:#003b2c;right:438px;text-align:right;">2 485</div>
<div class="t" style="top:765.02px;font-size:21.6px;line-height:27px;font-weight:bold;color:#003b2c;right:299px;text-align:right;">11 165</div>
<div class="t" style="top:765.02px;font-size:21.6px;line-height:27px;font-weight:bold;color:#003b2c;right:172px;text-align:right;">7 065</div>
<div class="t" style="top:765.02px;font-size:21.6px;line-height:27px;font-weight:bold;color:#003b2c;right:45px;text-align:right;">4 635</div>
<div class="a" style="z-index:1;left:385px;top:352px;width:476px;height:93px;background:rgba(255,255,255,0.12)"></div>
<svg style="z-index:1;left:0;top:0" width="1" height="1"><path d="M391 362.5 Q437 351 483 362.5 C 483.5 402 463 424 437 440 C 411 424 390.5 402 391 362.5 Z" fill="rgba(110,180,175,0.27)"/><g fill="none" stroke="rgba(255,255,255,0.32)"><path d="M400.5 373.5 Q418 386 437 390 Q456 386 473.5 373.5" stroke-width="4.2"/><circle cx="423" cy="393" r="6.8" stroke-width="4.2"/><circle cx="450" cy="393" r="6.8" stroke-width="4.2"/><path d="M404 384 Q406 394 414 400 M409 380 Q409 390 415 396 M470 384 Q468 394 460 400 M465 380 Q465 390 459 396" stroke-width="2.2"/></g><path d="M432.5 389 L441.5 389 L437 412 Z" fill="rgba(255,255,255,0.32)"/><rect x="802" y="358" width="53" height="53" fill="rgba(110,180,175,0.26)"/></svg>
<div class="t" style="z-index:1;left:506px;top:352.8px;font-size:44px;line-height:60px;letter-spacing:0.6px;transform-origin:0 0;transform:scaleX(1.13);-webkit-text-stroke:1.4px #000;color:#000;opacity:0.075">БухЭксперт</div>
<div class="t" style="z-index:1;left:814.5px;top:355px;font-size:38px;font-weight:bold;line-height:60px;color:rgba(255,255,255,0.25)">8</div>
<div class="t" style="z-index:1;left:507px;top:414px;font-size:18px;line-height:26px;letter-spacing:4.85px;-webkit-text-stroke:0.4px #000;color:#000;opacity:0.07">База ответов по учету в 1С</div>
</body></html>
